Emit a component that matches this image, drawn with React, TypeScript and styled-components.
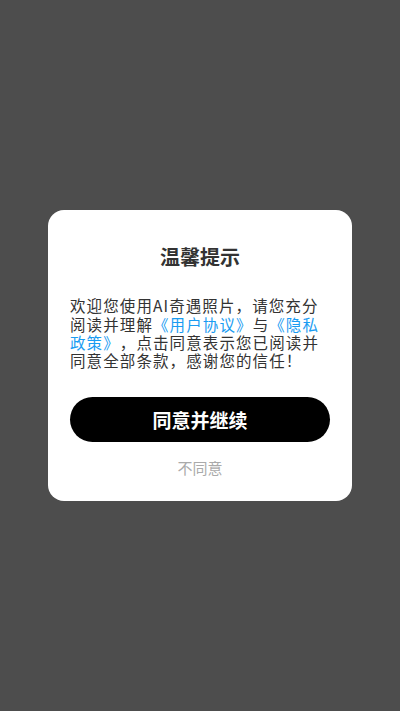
import styled, { createGlobalStyle } from 'styled-components';

const GlobalStyle = createGlobalStyle`
  html, body {
    margin: 0;
    padding: 0;
    background: #4d4d4d;
    font-family: "Noto Sans CJK SC", "Noto Sans", sans-serif;
  }
`;

const Overlay = styled.div`
  min-height: 100vh;
  display: flex;
  justify-content: center;
  align-items: center;
  background: #4d4d4d;
`;

const Dialog = styled.div`
  width: 304px;
  box-sizing: border-box;
  padding: 35px 22px 23px;
  background: #ffffff;
  border-radius: 16px;
  display: flex;
  flex-direction: column;
`;

const Title = styled.h2`
  margin: 0;
  font-size: 20px;
  line-height: 24px;
  font-weight: 700;
  color: #333333;
  text-align: center;
`;

const Message = styled.p`
  margin: 27px 0 0;
  font-size: 15.5px;
  letter-spacing: 1.1px;
  line-height: 18.4px;
  color: #333333;
  text-spacing-trim: space-all;
`;

const Link = styled.span`
  color: #1a9cf2;
`;

const AgreeButton = styled.button`
  margin-top: 27px;
  height: 45px;
  width: 100%;
  border: none;
  border-radius: 23px;
  background: #000000;
  color: #ffffff;
  font-family: inherit;
  font-size: 19px;
  font-weight: 700;
  cursor: pointer;
`;

const RejectButton = styled.button`
  margin-top: 16px;
  align-self: center;
  border: none;
  background: none;
  padding: 0;
  font-family: inherit;
  font-size: 15px;
  line-height: 20px;
  color: #aaaaaa;
  cursor: pointer;
`;

export default function App() {
  return (
    <>
      <GlobalStyle />
      <Overlay>
        <Dialog>
          <Title>温馨提示</Title>
          <Message>
            欢迎您使用AI奇遇照片，请您充分阅读并理解<Link>《用户协议》</Link>与
            <Link>《隐私政策》</Link>，点击同意表示您已阅读并同意全部条款，感谢您的信任！
          </Message>
          <AgreeButton>同意并继续</AgreeButton>
          <RejectButton>不同意</RejectButton>
        </Dialog>
      </Overlay>
    </>
  );
}
